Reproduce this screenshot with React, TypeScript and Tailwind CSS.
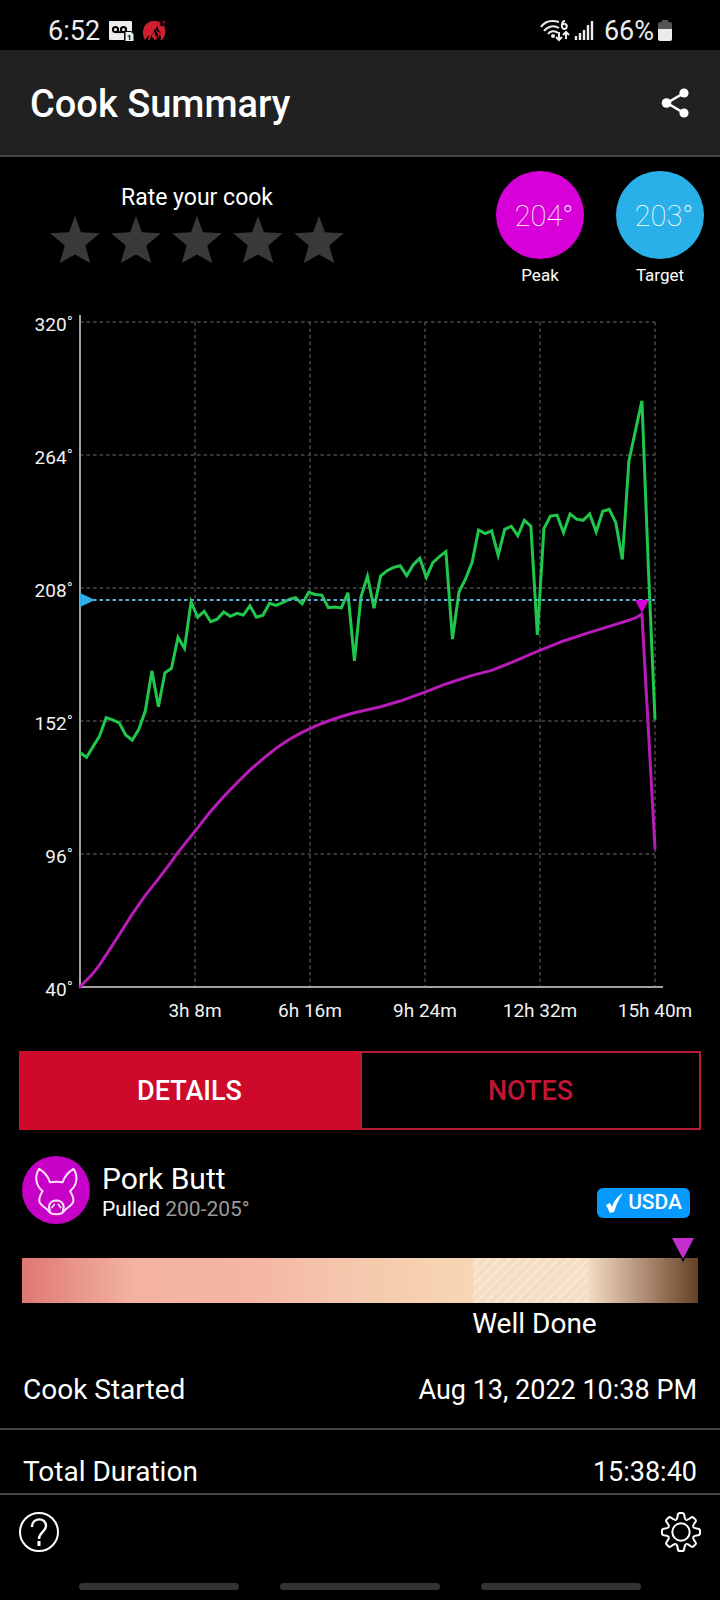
import { useState } from 'react'

const PIT_TEMPS = [
  138.7, 136.7, 141.2, 145.7, 153.4, 152.5, 151.2, 146.1, 143.9, 148.5, 156.3, 173.1, 158, 172.3, 174.2,
  187.2, 182.6, 202.2, 195.7, 198.2, 193.8, 194.9, 197.9, 196.1, 197.3, 196.6, 200.5, 195.7, 196.5, 201.6,
  200.7, 201.8, 203.2, 203.9, 201.3, 206.2, 205.3, 205, 199.7, 200, 199.6, 206, 177.3, 204.3, 213, 199.5,
  213, 215.3, 216.7, 217.4, 213.2, 217.8, 220.5, 212.5, 218.7, 221.2, 223.3, 186.5, 206.3, 211.8, 218.7,
  232.4, 230.9, 232.1, 221.8, 232.7, 234, 230, 236.5, 234, 188.3, 233, 238.3, 238.7, 231.3, 239.2, 237,
  236.5, 239.2, 231.6, 240.3, 241.1, 235.5, 220, 261.3, 274.2, 286.8, 215.6, 152.6,
]

// [sample index, temperature]
const MEAT_TEMPS: [number, number][] = [
  [0, 40], [2, 45.8], [3, 49.3], [4, 53.5], [6, 62], [8, 70.7], [10, 78.6], [12, 85.5], [14, 92.8],
  [15, 96.7], [18, 107], [20, 114], [22, 120.2], [24, 125.9], [26, 131.3], [28, 136.1], [30, 140.5],
  [32, 144.2], [34, 147.2], [36, 149.8], [38, 152], [40, 153.9], [42, 155.5], [46, 158], [49, 160.4],
  [53, 164.4], [56, 167.6], [60, 171.2], [63, 173.3], [66, 176.6], [70, 181.3], [74, 185.7], [78, 189.3],
  [82, 192.7], [84, 194.4], [85, 195.4], [86, 197], [88, 98.4],
]

const TARGET = 203
const Y_TICKS = [320, 264, 208, 152, 96, 40]
const X_TICKS = ['3h 8m', '6h 16m', '9h 24m', '12h 32m', '15h 40m']

const LEFT = 80
const RIGHT = 655
const TOP = 23
const BOTTOM = 688

const xAt = (i: number) => LEFT + ((RIGHT - LEFT) * i) / 88
const yAt = (t: number) => BOTTOM - ((BOTTOM - TOP) * (t - 40)) / 280
const toPoints = (data: [number, number][]) => data.map(([i, t]) => `${xAt(i)},${yAt(t)}`).join(' ')

function StatusBar() {
  return (
    <div className="flex h-[50px] items-center justify-between pt-3 pr-12 pl-12 text-[27px] leading-8 text-[#ececec]">
      <div className="flex items-center gap-2">
        <span>6:52</span>
        <svg width="26" height="22" viewBox="0 0 26 22" aria-hidden="true">
          <rect x="1" y="1" width="23" height="19" rx="1" fill="#ececec" />
          <g fill="none" stroke="#000" strokeWidth="2">
            <circle cx="7.5" cy="9.5" r="2.6" />
            <circle cx="15.5" cy="9.5" r="2.6" />
            <path d="M7.5 12.1h8" />
          </g>
          <path d="M16 11h7l3 2v9H16z" fill="#000" />
          <path d="M17.5 12H23l2.5 2v7h-8z" fill="#ececec" />
          <text x="19" y="19.5" fontSize="8" fontWeight="700" fill="#000">1</text>
        </svg>
        <svg width="24" height="22" viewBox="0 0 24 22" aria-hidden="true">
          <path
            d="M2 18C-1 10 3 1 12 1c3 0 4 0 6 1l5-1-1 5c2 4 2 8-1 13-1 1-2 1-3 1 2-2 1-4-1-6 0 2 0 3-1 4 0-5-1-7-4-9 1 4-3 6-4 9-1-1-1-2-1-3-3 3-4 4-3 6z"
            fill="#cf2030"
          />
          <path d="M10 15l3-3c-1 4 3 4 2 7l-2 1-3-3zM7 16a2 2 0 1 1-1 4z" fill="#cf2030" />
          <circle cx="20" cy="4" r="2.4" fill="#2a0508" />
          <path d="M13 9l3-3c-1 3 2 5 3 8-2-2-4-3-6-5z" fill="#000" />
        </svg>
      </div>
      <div className="flex items-center">
        <svg width="30" height="24" viewBox="0 0 30 24" fill="none" stroke="#ececec" strokeWidth="2" aria-hidden="true">
          <path d="M1 8C5 2 12 1 19 3M4 12c4-5 10-6 15-3M8 15c2-3 7-4 10-1" />
          <circle cx="13" cy="17" r="1" fill="#ececec" />
          <path d="M25 2c-4 0-4 8-1 8a2.6 2.6 0 1 0-2-4" />
          <path d="M19 13v8M16 18l3 3 3-3M26 20v-7M23 16l3-3 3 3" />
        </svg>
        <svg width="20" height="22" viewBox="0 0 20 22" stroke="#ececec" strokeWidth="2.4" className="ml-1" aria-hidden="true">
          <path d="M2 20v-4M6 20v-7M10 20v-10M14 20V5M18 20V1" />
        </svg>
        <span className="ml-[10px]">66%</span>
        <svg width="14" height="22" viewBox="0 0 14 22" className="ml-1" aria-hidden="true">
          <path d="M4 0h6v2h2q2 0 2 2v6H0V4q0-2 2-2h2z" fill="#555" />
          <path d="M0 9h14v10q0 2-2 2H2q-2 0-2-2z" fill="#ececec" />
        </svg>
      </div>
    </div>
  )
}

function Header() {
  return (
    <header className="flex h-[107px] items-center justify-between border-b-2 border-[#454545] bg-[#212121] pr-[29px] pl-[30px]">
      <h1 className="pt-[2px] text-[38px] leading-[44px] font-medium">Cook Summary</h1>
      <button type="button" aria-label="Share">
        <svg width="30" height="30" viewBox="0 0 30 30" fill="#fff">
          <path d="M23 5L6 15l17 10" fill="none" stroke="#fff" strokeWidth="2.6" />
          <circle cx="23" cy="5" r="4.6" />
          <circle cx="5.5" cy="15" r="4.8" />
          <circle cx="23" cy="25" r="4.6" />
        </svg>
      </button>
    </header>
  )
}

function Rating() {
  const [rating, setRating] = useState(0)
  return (
    <div className="flex flex-col items-center gap-1 pt-[13px]">
      <p className="text-[23px] leading-7">Rate your cook</p>
      <div className="flex gap-[11px]">
        {[1, 2, 3, 4, 5].map((n) => (
          <button key={n} type="button" aria-label={`${n} stars`} onClick={() => setRating(n)}>
            <svg
              viewBox="0 0 150 142"
              className={`h-[47px] w-[50px] ${n <= rating ? 'fill-amber-400' : 'fill-[#393939]'}`}
            >
              <path d="M75 0L93 49L150 52L106 89L121 142L75 116L29 142L44 89L0 52L57 49z" />
            </svg>
          </button>
        ))}
      </div>
    </div>
  )
}

function TempCircle({ value, label, color }: { value: number; label: string; color: string }) {
  return (
    <div className="flex flex-col items-center gap-1">
      <div className={`flex size-[88px] items-center justify-center rounded-full pt-1 pl-2 text-[29px] font-thin ${color}`}>
        {value}°
      </div>
      <p className="text-[17px] leading-6">{label}</p>
    </div>
  )
}

function TempChart() {
  const peakX = xAt(86)
  const targetY = yAt(TARGET)
  return (
    <svg viewBox="0 0 720 736" className="mt-3 block w-full" role="img" aria-label="Temperature over time">
      <g stroke="#484848" strokeWidth="1.5" strokeDasharray="3.5 3">
        {Y_TICKS.slice(0, -1).map((t) => (
          <line key={t} x1={LEFT} x2={RIGHT} y1={yAt(t)} y2={yAt(t)} />
        ))}
        {X_TICKS.map((label, i) => (
          <line key={label} x1={195 + i * 115} x2={195 + i * 115} y1={TOP} y2={BOTTOM} />
        ))}
      </g>
      <path d={`M${LEFT} 16V${BOTTOM}H663`} fill="none" stroke="#a0a0a0" strokeWidth="2" />

      <g fill="#f2f2f2" fontSize="19">
        {Y_TICKS.map((t) => (
          <text key={t} x="73" y={yAt(t) + 9} textAnchor="end">{t}˚</text>
        ))}
        {X_TICKS.map((label, i) => (
          <text key={label} x={195 + i * 115} y="718" textAnchor="middle">{label}</text>
        ))}
      </g>

      <polyline
        points={toPoints(PIT_TEMPS.map((t, i) => [i, t]))}
        fill="none"
        stroke="#1fc84c"
        strokeWidth="3"
      />
      <polyline points={toPoints(MEAT_TEMPS)} fill="none" stroke="#b81cb8" strokeWidth="3" strokeLinejoin="round" strokeLinecap="round" />

      <line x1={LEFT} x2={RIGHT} y1={targetY} y2={targetY} stroke="#5aaed6" strokeWidth="2" strokeDasharray="3.5 3" />
      <path d={`M${LEFT} ${targetY - 7}l15 7l-15 7z`} fill="#31aee6" />
      <path d={`M${peakX - 7} ${targetY}h14l-7 13z`} fill="#d800d8" />
    </svg>
  )
}

function Tabs() {
  const [tab, setTab] = useState('DETAILS')
  return (
    <div className="mx-[19px] mt-4 grid h-[79px] grid-cols-2 text-[27px] font-medium" role="tablist">
      {['DETAILS', 'NOTES'].map((name) => (
        <button
          key={name}
          type="button"
          role="tab"
          aria-selected={tab === name}
          onClick={() => setTab(name)}
          className={`border-2 pt-[2px] ${tab === name ? 'border-[#ce0a2b] bg-[#ce0a2b] text-white' : 'border-[#b81d38] text-[#c01534]'}`}
        >
          {name}
        </button>
      ))}
    </div>
  )
}

function PigIcon() {
  return (
    <svg viewBox="67 349 202 202" className="size-[68px] shrink-0" aria-hidden="true">
      <circle cx="168" cy="450" r="101" fill="#c600c6" />
      <g fill="none" stroke="#fbe3fb" strokeWidth="6" strokeLinejoin="round" strokeLinecap="round">
        <path d="M118 387C133 396 145 410 150 427Q169 424 188 427C193 410 205 396 220 387C232 405 234 434 210 453C216 465 222 473 219 485C215 495 204 501 196 508C189 517 184 522 169 522C154 522 149 517 142 508C134 501 123 495 119 485C116 473 122 465 128 453C104 434 106 405 118 387z" />
        <path d="M150 513C143 497 150 481 169 481C188 481 195 497 188 513" />
        <path d="M156 502l7-9M182 502l-7-9" strokeWidth="5" />
      </g>
    </svg>
  )
}

function Doneness() {
  return (
    <section className="mx-[22px] mt-[26px]">
      <div className="flex items-center gap-3">
        <PigIcon />
        <div className="flex-1 pt-1">
          <h2 className="text-[30px] leading-[34px]">Pork Butt</h2>
          <p className="text-[21px] leading-[26px]">
            Pulled <span className="text-[#9a9a9a]">200-205°</span>
          </p>
        </div>
        <span className="mr-2 mb-[6px] flex h-[30px] items-center gap-1 self-end rounded-md bg-[#069aff] px-2 text-[21px] font-medium">
          <svg width="19" height="20" viewBox="0 0 19 20" fill="#fff" aria-hidden="true">
            <path d="M1 12l4-2 2 4C9 8 12 4 18 0c-4 6-7 12-9 19l-4 1z" />
          </svg>
          USDA
        </span>
      </div>

      <div className="relative mt-[34px] flex h-[45px]">
        <div className="w-2/3 bg-[linear-gradient(to_right,#df7875,#f3b3a0_25%,#f4b5a2_50%,#f4c6ab_70%,#f7d6b5)]" />
        <div className="w-[17%] bg-[repeating-linear-gradient(135deg,#f4dfc6_0px,#f4dfc6_4px,#faebd8_5px,#f4dfc6_7px)]" />
        <div className="flex-1 bg-[linear-gradient(to_right,#f3dcc1,#b39279_48%,#644125)]" />
        <svg width="26" height="24" viewBox="0 0 26 24" className="absolute -top-5 right-[2px]" aria-hidden="true">
          <path d="M1 0h24L13 24z" fill="#000" />
          <path d="M2 0h22L13 21z" fill="#c22fce" />
        </svg>
      </div>
      <p className="mt-[3px] ml-[66.6%] text-[28px] leading-9">Well Done</p>
    </section>
  )
}

function DetailRow({ label, value }: { label: string; value: string }) {
  return (
    <div className="flex justify-between border-b-2 border-[#454545] px-[23px] pt-6 pb-5 text-[28px] leading-9 last:border-0 last:pb-[3px]">
      <dt>{label}</dt>
      <dd className="text-[27px]">{value}</dd>
    </div>
  )
}

function Footer() {
  return (
    <footer className="mt-auto border-t-2 border-[#454545] pt-[17px] pb-[10px]">
      <div className="flex justify-between px-[19px]">
        <button type="button" aria-label="Help">
          <svg width="40" height="40" viewBox="0 0 40 40" fill="none" stroke="#fff" strokeWidth="2">
            <circle cx="20" cy="20" r="19" />
            <path d="M13 15c0-10 14-10 14-1 0 6-7 6-7 13" strokeWidth="2.4" />
            <path d="M20 29v5" strokeWidth="3" />
          </svg>
        </button>
        <button type="button" aria-label="Settings">
          <svg width="40" height="40" viewBox="-20 -20 40 40" fill="none" stroke="#fff" strokeWidth="2">
            <circle r="8.7" />
            {[0, 45, 90, 135, 180, 225, 270, 315].map((angle) => (
              <path
                key={angle}
                transform={`rotate(${angle})`}
                d="M-5.05-12.2C-3.8-12.7-3.5-14.5-3.2-17Q-2.9-19-1.2-19H1.2Q2.9-19 3.2-17C3.5-14.5 3.8-12.7 5.05-12.2"
              />
            ))}
          </svg>
        </button>
      </div>
      <div className="mt-[31px] grid grid-cols-3 gap-[41px] px-[79px]">
        <div className="h-[7px] rounded-full bg-[#333]" />
        <div className="h-[7px] rounded-full bg-[#333]" />
        <div className="h-[7px] rounded-full bg-[#333]" />
      </div>
    </footer>
  )
}

export default function App() {
  return (
    <div className="flex min-h-screen flex-col bg-black font-[Roboto,sans-serif] text-white">
      <StatusBar />
      <Header />
      <main>
        <div className="flex justify-between pt-[14px] pr-4 pl-[50px]">
          <Rating />
          <div className="flex gap-8">
            <TempCircle value={204} label="Peak" color="bg-[#d800d8]" />
            <TempCircle value={TARGET} label="Target" color="bg-[#2ab0e8]" />
          </div>
        </div>
        <TempChart />
        <Tabs />
        <Doneness />
        <dl className="mt-[6px]">
          <DetailRow label="Cook Started" value="Aug 13, 2022 10:38 PM" />
          <DetailRow label="Total Duration" value="15:38:40" />
        </dl>
      </main>
      <Footer />
    </div>
  )
}
